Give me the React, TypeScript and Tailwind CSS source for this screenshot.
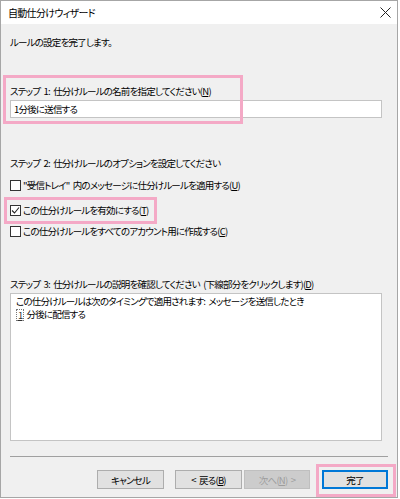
import React from "react";

const font = {
  fontFamily: '"Noto Sans CJK JP", "Noto Sans", sans-serif',
};

function U({ children }: { children: React.ReactNode }) {
  return <span className="underline underline-offset-[1px]">{children}</span>;
}

function Check({ checked }: { checked?: boolean }) {
  return (
    <span className="w-[11px] h-[11px] border border-[#333] bg-white flex items-center justify-center shrink-0">
      {checked && (
        <svg width="9" height="9" viewBox="0 0 9 9">
          <path d="M1 4.5 L3.5 7 L8 1.5" fill="none" stroke="#222" strokeWidth="1.1" />
        </svg>
      )}
    </span>
  );
}

function Btn({
  children,
  disabled,
  primary,
  w,
}: {
  children: React.ReactNode;
  disabled?: boolean;
  primary?: boolean;
  w: string;
}) {
  return (
    <div
      className={
        w +
        " h-[19px] flex items-center justify-center " +
        (disabled
          ? "bg-[#cccccc] border border-[#bfbfbf] text-[#9d9d9d]"
          : primary
          ? "bg-[#e1e1e1] border-2 border-[#0078d7] text-black"
          : "bg-[#e1e1e1] border border-[#adadad] text-black")
      }
    >
      {children}
    </div>
  );
}

export default function App() {
  return (
    <div className="w-[400px] h-[499px] bg-white" style={{ ...font, fontFeatureSettings: '"palt"' }}>
      <div className="relative w-[398px] h-[498px] border border-[#a6a6a6] bg-[#f0f0f0] flex flex-col text-[9.5px] tracking-[-0.8px] [word-spacing:2px] text-black leading-[14px]">
        {/* Title bar */}
        <div className="h-[23px] bg-white flex items-center justify-between pl-[7px] pr-[5px]">
          <span className="text-[10px] tracking-[-0.7px]">自動仕分けウィザード</span>
          <svg width="11" height="11" viewBox="0 0 11 11" className="mr-[1px]">
            <path d="M0.5 0.5 L10.5 10.5 M10.5 0.5 L0.5 10.5" stroke="#222" strokeWidth="1" />
          </svg>
        </div>

        <div className="flex flex-col pl-[9px] pr-[9px]">
          <div className="mt-[11px] h-[14px] flex items-center">ルールの設定を完了します。</div>

          <div className="mt-[35px] h-[14px] flex items-center">
            ステップ 1: 仕分けルールの名前を指定してください(<U>N</U>)
          </div>
          <div className="mt-[2px] w-[372px] h-[18px] bg-white border border-[#c4c4c4] flex items-center pl-[3px]">
            1分後に送信する
          </div>

          <div className="mt-[38px] h-[14px] flex items-center">
            ステップ 2: 仕分けルールのオプションを設定してください
          </div>
          <div className="mt-[8px] h-[14px] flex items-center gap-[2px]">
            <Check />
            <span>"受信トレイ" 内のメッセージに仕分けルールを適用する(<U>U</U>)</span>
          </div>
          <div className="mt-[11px] h-[14px] flex items-center gap-[2px]">
            <Check checked />
            <span>この仕分けルールを有効にする(<U>T</U>)</span>
          </div>
          <div className="mt-[7px] h-[14px] flex items-center gap-[2px]">
            <Check />
            <span>この仕分けルールをすべてのアカウント用に作成する(<U>C</U>)</span>
          </div>

          <div className="mt-[39px] h-[14px] flex items-center">
            ステップ 3: 仕分けルールの説明を確認してください (下線部分をクリックします)(<U>D</U>)
          </div>
          <div className="mt-[2px] w-[372px] h-[148px] bg-white border border-[#c4c4c4] pl-[5px] pt-[1px] leading-[13px]">
            <div>この仕分けルールは次のタイミングで適用されます: メッセージを送信したとき</div>
            <div className="flex items-center">
              <span className="underline text-[#333] border border-dotted border-[#777] leading-[10px] px-[1px] mr-[2px]">1</span>
              <span>分後に配信する</span>
            </div>
          </div>

          <div className="mt-[15px] w-[378px] h-px bg-[#a0a0a0]" />

          <div className="mt-[13px] w-[378px] flex justify-end items-center">
            <Btn w="w-[67px]">キャンセル</Btn>
            <div className="w-[11px]" />
            <Btn w="w-[67px]">
              &lt; 戻る(<U>B</U>)
            </Btn>
            <div className="w-[2px]" />
            <Btn w="w-[66px]" disabled>
              次へ(<U>N</U>) &gt;
            </Btn>
            <div className="w-[12px]" />
            <Btn w="w-[66px]" primary>完了</Btn>
          </div>
        </div>

        {/* pink highlight overlays */}
        <div className="absolute left-[2px] top-[74px] w-[240px] h-[49px] border-[3px] border-[#f4a9c6] pointer-events-none" />
        <div className="absolute left-[3px] top-[196px] w-[153px] h-[27px] border-[3px] border-[#f4a9c6] pointer-events-none" />
        <div className="absolute left-[315px] top-[463px] w-[80px] h-[33px] border-[3px] border-[#f4a9c6] pointer-events-none" />
      </div>
    </div>
  );
}
